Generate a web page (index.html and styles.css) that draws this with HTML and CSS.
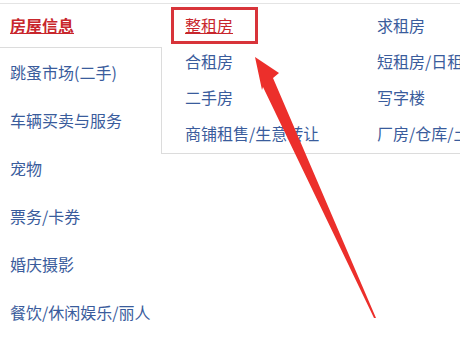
FILE: index.html
```html
<!DOCTYPE html>
<html lang="zh-CN">
<head>
<meta charset="utf-8">
<title>分类导航</title>
<link rel="stylesheet" href="styles.css">
</head>
<body>
<div class="nav">
  <ul class="cats">
    <li class="cat active"><a href="#">房屋信息</a></li>
    <li class="cat"><a href="#">跳蚤市场(二手)</a></li>
    <li class="cat"><a href="#">车辆买卖与服务</a></li>
    <li class="cat"><a href="#">宠物</a></li>
    <li class="cat"><a href="#">票务/卡券</a></li>
    <li class="cat"><a href="#">婚庆摄影</a></li>
    <li class="cat"><a href="#">餐饮/休闲娱乐/丽人</a></li>
  </ul>
  <div class="flyout">
    <ul class="sub">
      <li><a href="#" class="hover">整租房</a></li>
      <li><a href="#">求租房</a></li>
      <li><a href="#">合租房</a></li>
      <li><a href="#">短租房/日租房</a></li>
      <li><a href="#">二手房</a></li>
      <li><a href="#">写字楼</a></li>
      <li><a href="#">商铺租售/生意转让</a></li>
      <li><a href="#">厂房/仓库/土地</a></li>
    </ul>
  </div>
  <svg class="annot" width="460" height="345" viewBox="0 0 460 345">
    <rect x="172.5" y="8.5" width="84" height="34" fill="none" stroke="#d8343a" stroke-width="3"/>
    <polygon points="255,57 279,73 273,78 376,318 374,318 263,87 262,90" fill="#ec2f2b"/>
  </svg>
</div>
</body>
</html>
```
FILE: styles.css
```css
html, body {
  margin: 0;
  padding: 0;
  background: #ffffff;
}
body {
  font-family: "Noto Sans CJK SC", "Noto Sans", sans-serif;
  font-size: 16px;
  overflow: hidden;
  width: 460px;
  height: 345px;
}
.nav {
  position: relative;
  margin-top: 3px;
  border-top: 1px solid #e4e4e4;
  height: 341px;
}
.cats {
  list-style: none;
  margin: 0;
  padding: 0;
  width: 162px;
}
.cat {
  height: 48px;
  line-height: 48px;
  padding-left: 10px;
}
.cat a {
  color: #3a5c9c;
  text-decoration: none;
  white-space: nowrap;
}
.cat.active {
  position: relative;
  z-index: 2;
  background: #ffffff;
  height: 43px;
  line-height: 43px;
  border-bottom: 1px solid #dcdcdc;
  width: 151px;
  padding-right: 1px;
}
.cat.active a {
  color: #c8262c;
  font-weight: bold;
  text-decoration: underline;
}
.flyout {
  position: absolute;
  top: 0;
  left: 161px;
  width: 340px;
  height: 149px;
  background: #ffffff;
  border-left: 1px solid #dcdcdc;
  border-bottom: 1px solid #dcdcdc;
  z-index: 1;
}
.sub {
  list-style: none;
  margin: 0;
  padding: 3px 0 0 23px;
  display: grid;
  grid-template-columns: 192px 192px;
}
.sub li {
  height: 36px;
  line-height: 36px;
  white-space: nowrap;
}
.sub a {
  color: #3a5c9c;
  text-decoration: none;
}
.sub a.hover {
  color: #c8262c;
  text-decoration: underline;
}
.annot {
  position: absolute;
  top: -4px;
  left: 0;
  z-index: 3;
  pointer-events: none;
}
```
